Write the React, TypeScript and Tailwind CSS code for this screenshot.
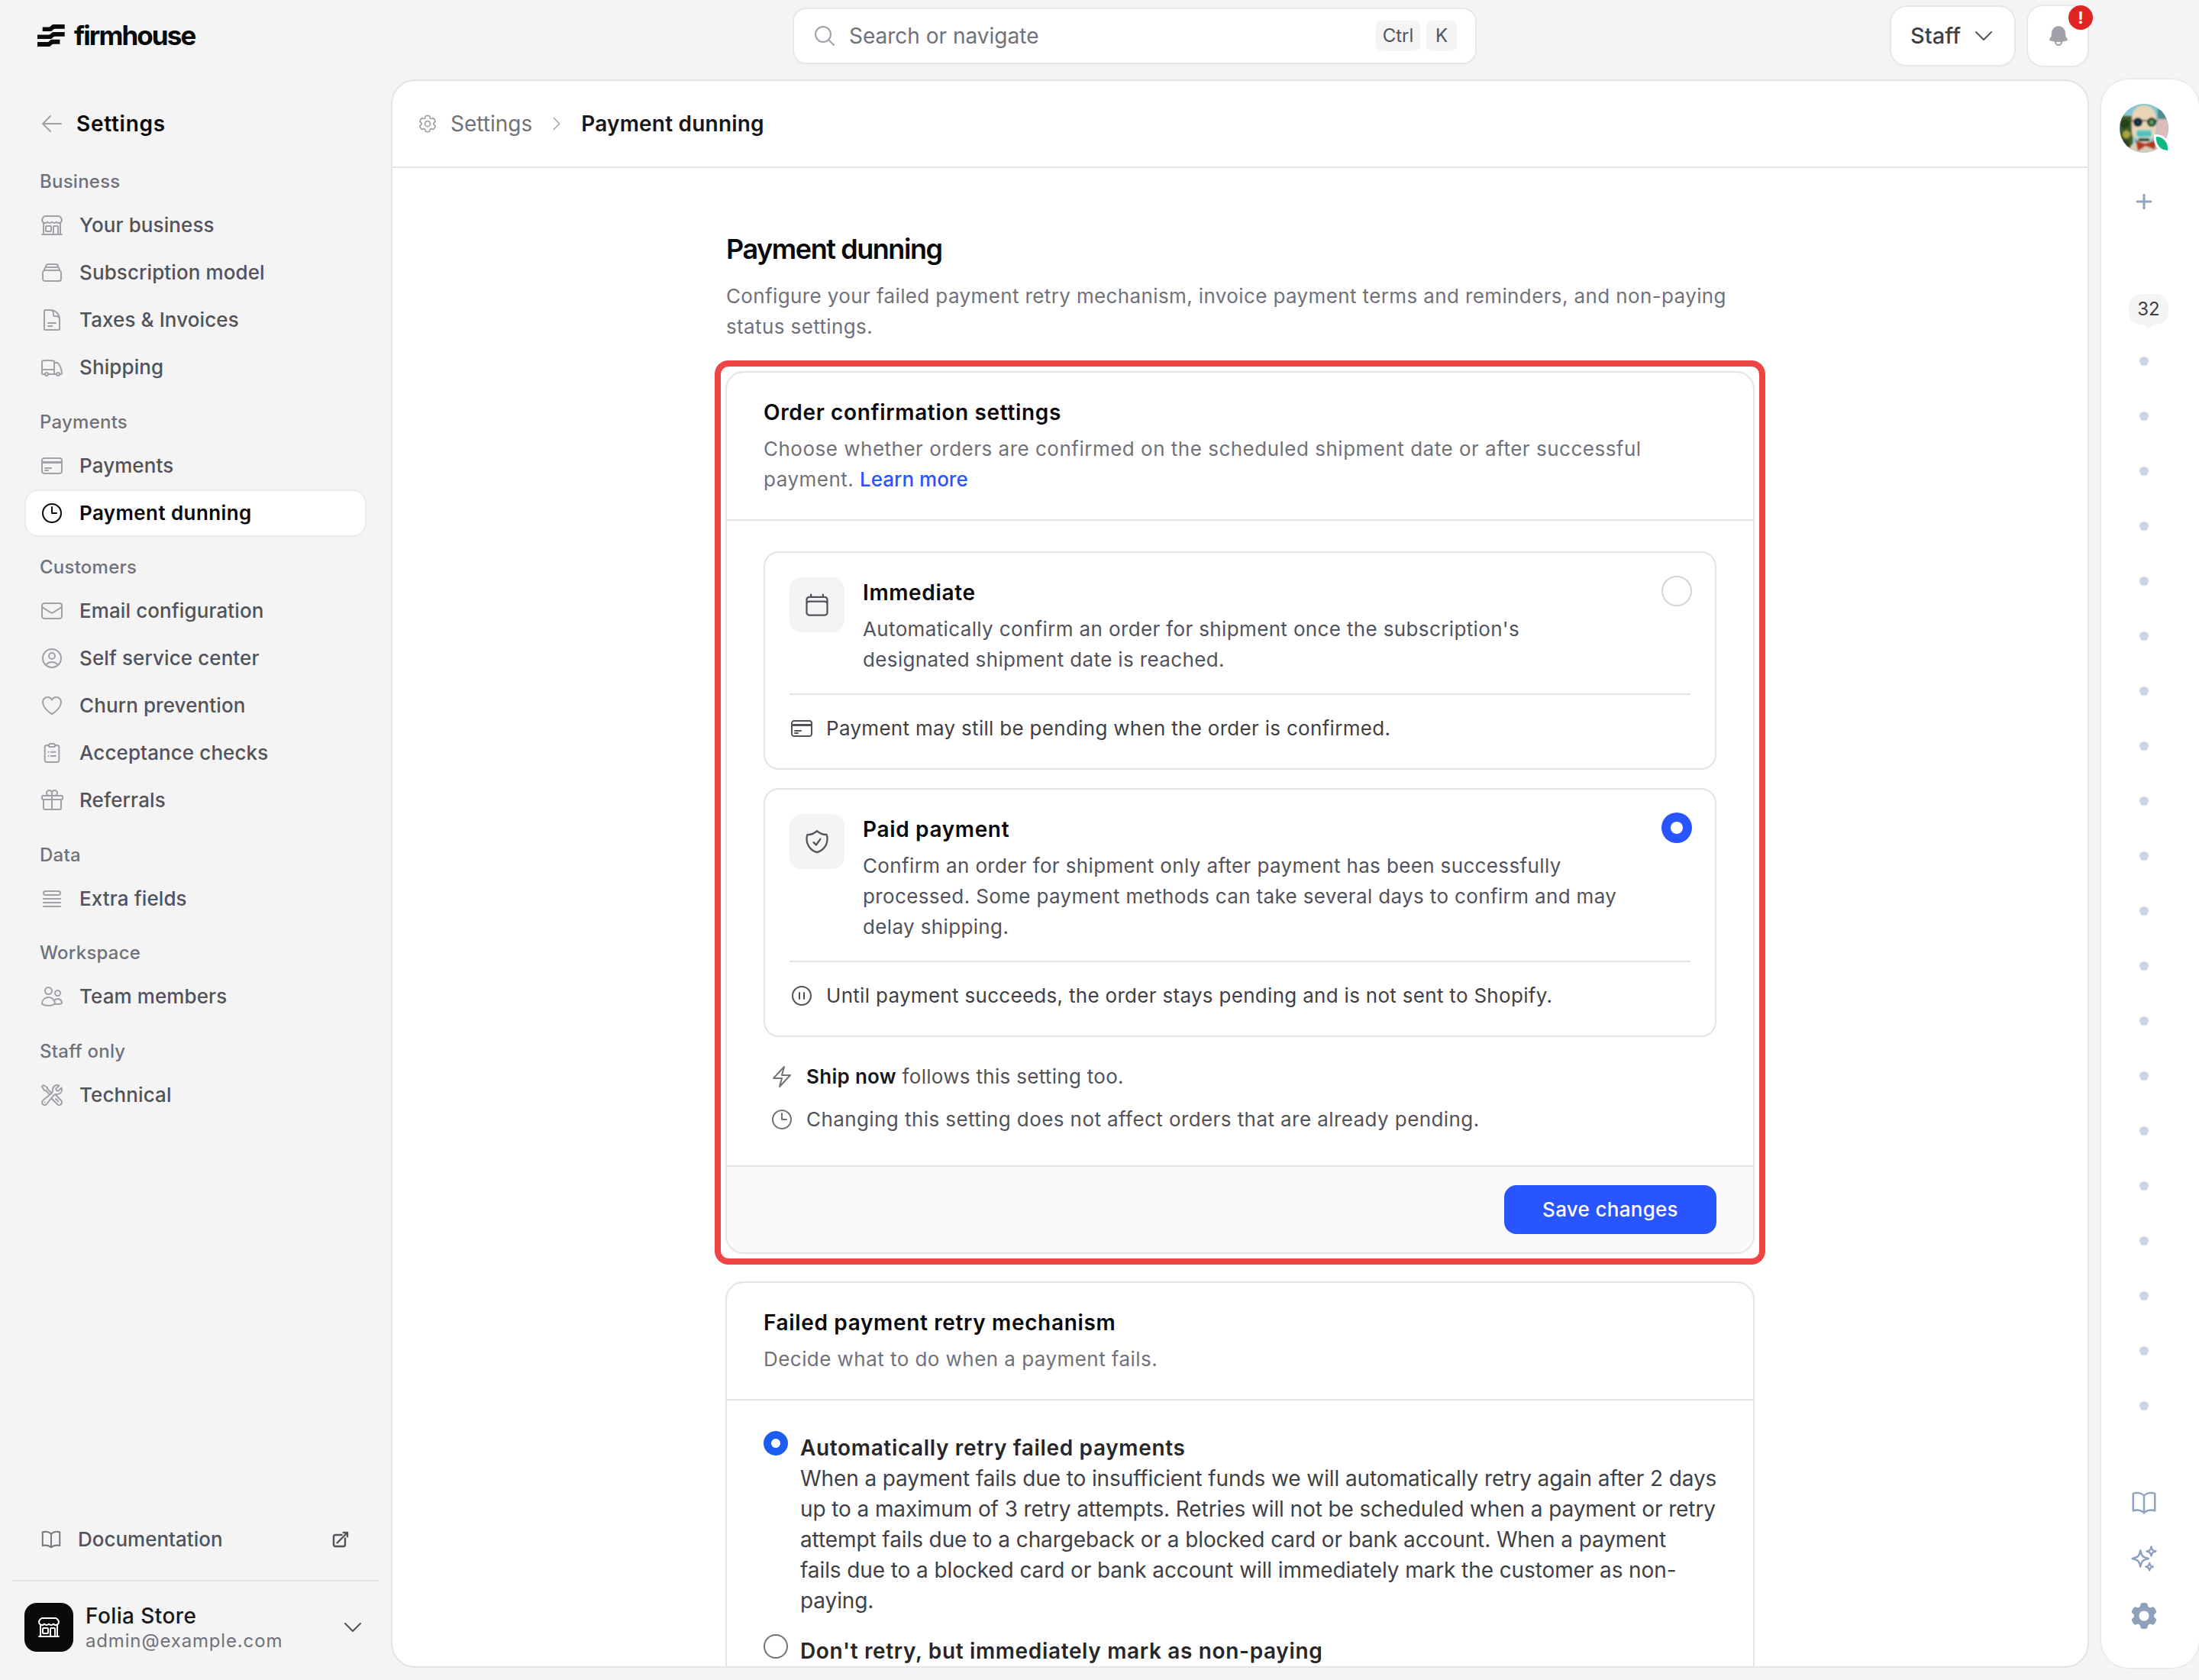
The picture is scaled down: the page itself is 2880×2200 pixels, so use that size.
import {
  HiOutlineArrowLeft,
  HiOutlineArrowTopRightOnSquare,
  HiOutlineBolt,
  HiOutlineBookOpen,
  HiOutlineBuildingStorefront,
  HiOutlineCalendar,
  HiOutlineChevronDown,
  HiOutlineChevronRight,
  HiOutlineClock,
  HiOutlineCog6Tooth,
  HiOutlineCreditCard,
  HiOutlineDocumentText,
  HiOutlineEnvelope,
  HiOutlineGift,
  HiOutlineHeart,
  HiOutlineMagnifyingGlass,
  HiOutlinePauseCircle,
  HiOutlineQueueList,
  HiOutlineRectangleStack,
  HiOutlineShieldCheck,
  HiOutlineSparkles,
  HiOutlineTruck,
  HiOutlineUserCircle,
  HiOutlineUsers,
  HiOutlineWrenchScrewdriver,
  HiBell,
  HiCog6Tooth,
  HiPlus,
} from "react-icons/hi2";
import type { ComponentType, ReactNode, SVGProps } from "react";

type Icon = ComponentType<SVGProps<SVGSVGElement> & { className?: string }>;

const ClipboardList: Icon = (props) => (
  <svg viewBox="0 0 24 24" fill="none" stroke="currentColor" strokeWidth={1.5} strokeLinecap="round" strokeLinejoin="round" {...props}>
    <path d="M9 4.5H6.75A1.75 1.75 0 0 0 5 6.25v13A1.75 1.75 0 0 0 6.75 21h10.5A1.75 1.75 0 0 0 19 19.25v-13a1.75 1.75 0 0 0-1.75-1.75H15" />
    <rect x="9" y="3" width="6" height="3" rx="1.2" />
    <path d="M11 11h4.5M11 15h4.5M8.5 11h.01M8.5 15h.01" />
  </svg>
);

const navGroups: { label: string; items: { label: string; icon: Icon; active?: boolean }[] }[] = [
  {
    label: "Business",
    items: [
      { label: "Your business", icon: HiOutlineBuildingStorefront },
      { label: "Subscription model", icon: HiOutlineRectangleStack },
      { label: "Taxes & Invoices", icon: HiOutlineDocumentText },
      { label: "Shipping", icon: HiOutlineTruck },
    ],
  },
  {
    label: "Payments",
    items: [
      { label: "Payments", icon: HiOutlineCreditCard },
      { label: "Payment dunning", icon: HiOutlineClock, active: true },
    ],
  },
  {
    label: "Customers",
    items: [
      { label: "Email configuration", icon: HiOutlineEnvelope },
      { label: "Self service center", icon: HiOutlineUserCircle },
      { label: "Churn prevention", icon: HiOutlineHeart },
      { label: "Acceptance checks", icon: ClipboardList },
      { label: "Referrals", icon: HiOutlineGift },
    ],
  },
  { label: "Data", items: [{ label: "Extra fields", icon: HiOutlineQueueList }] },
  { label: "Workspace", items: [{ label: "Team members", icon: HiOutlineUsers }] },
  { label: "Staff only", items: [{ label: "Technical", icon: HiOutlineWrenchScrewdriver }] },
];

const dots = Array.from({ length: 20 }, (_, i) => i);

const Logo = () => (
  <svg viewBox="0 0 36 29" className="w-[36px] h-[29px] shrink-0" fill="#0a0a0a">
    <path d="M6.7 3.4H15C18 3.4 18 0 21 0H35.7V5.7H23C20 5.7 20 9 17 9H6.7Z" />
    <path d="M0 13.4H15C18 13.4 18 10 21 10H35.7V15.7H23C20 15.7 20 19 17 19H0Z" />
    <path d="M0 23H13C16 23 16 19.7 19 19.7H29.4V25.7H21C18 25.7 18 29 15 29H0Z" />
  </svg>
);

const Avatar = () => (
  <div className="relative w-[64px] h-[64px] shrink-0">
    <svg viewBox="0 0 64 64" className="w-[64px] h-[64px] rounded-full">
      <defs>
        <filter id="soft">
          <feGaussianBlur stdDeviation="0.9" />
        </filter>
      </defs>
      <rect width="64" height="64" fill="#86c3d6" />
      <g filter="url(#soft)">
        <rect x="0" y="16" width="17" height="48" fill="#3f5a2c" />
        <circle cx="7" cy="26" r="6" fill="#27401f" />
        <circle cx="9" cy="40" r="5" fill="#a6a63c" />
        <circle cx="6" cy="54" r="7" fill="#2e3f1e" />
        <rect x="49" y="20" width="15" height="44" fill="#dcbdb9" />
        <rect x="50" y="6" width="12" height="14" fill="#4d8b8c" />
        <path d="M12 64C12 52 24 48 32 48S50 52 50 64Z" fill="#d6cdbb" />
        <path d="M16 20C16 7 24 2 32 2S48 7 48 20V38C48 44 40 47 32 47S16 44 16 38Z" fill="#e8d5b6" />
        <path d="M15 21H50V23H15Z" fill="#6b5a48" />
        <circle cx="24" cy="24" r="6" fill="#101820" />
        <circle cx="24" cy="24" r="3.2" fill="#1f3a5c" />
        <circle cx="42" cy="24" r="6" fill="#16251c" />
        <circle cx="42" cy="24" r="3.2" fill="#4f9c5e" />
        <rect x="22" y="34" width="20" height="10" rx="3.5" fill="#66cfcc" />
        <path d="M23 38H41M23 40.5H41" stroke="#2f8f92" strokeWidth="0.8" />
        <rect x="25" y="45" width="14" height="4" fill="#2c3a2e" />
        <path d="M21 48L33 52L48 48L46 60L34 55L24 62Z" fill="#b5381f" />
      </g>
    </svg>
    <span className="absolute right-[1px] bottom-[3px] w-[15px] h-[18px] rounded-tr-full rounded-bl-full bg-[#10b981] ring-[3px] ring-white" />
  </div>
);

const NavItem = ({ label, icon: ItemIcon, active }: { label: string; icon: Icon; active?: boolean }) => (
  <a
    className={
      active
        ? "flex items-center gap-[20px] h-[58px] px-[18px] rounded-[16px] bg-white shadow-[0_0_0_2px_#ececec] text-[26px] tracking-[0.4px] text-[#09090b] font-semibold"
        : "flex items-center gap-[20px] h-[58px] px-[18px] rounded-[16px] text-[26px] tracking-[0.1px] text-[#52525b] font-medium"
    }
  >
    <ItemIcon className={active ? "w-[32px] h-[32px] text-[#09090b]" : "w-[32px] h-[32px] text-[#a1a1aa]"} />
    <span>{label}</span>
  </a>
);

const Sidebar = () => (
  <aside className="w-[512px] shrink-0 flex flex-col text-[28px] leading-[40px]">
    <div className="flex items-center gap-[12px] pl-[49px] h-[92px]">
      <Logo />
      <span className="text-[35px] font-bold tracking-[-0.055em] text-[#0a0a0a]">firmhouse</span>
    </div>
    <div className="flex items-center gap-[16px] px-[52px] h-[40px] mt-[50px] mb-[40px]">
      <HiOutlineArrowLeft className="w-[32px] h-[32px] text-[#a1a1aa]" />
      <span className="font-semibold text-[#09090b] tracking-[0.026em]">Settings</span>
    </div>
    <nav className="flex flex-col gap-[26.5px] px-[34px]">
      {navGroups.map((group) => (
        <div key={group.label} className="flex flex-col">
          <div className="h-[32px] px-[18px] mb-[12px] text-[24px] leading-[32px] font-medium tracking-[0.01em] text-[#71717a]">
            {group.label}
          </div>
          <div className="flex flex-col gap-[4px]">
            {group.items.map((item) => (
              <NavItem key={item.label} {...item} />
            ))}
          </div>
        </div>
      ))}
    </nav>
    <div className="mt-auto flex items-center h-[56px] pl-[52px] pr-[54px] text-[26px] text-[#52525b] font-medium">
      <HiOutlineBookOpen className="w-[30px] h-[30px] text-[#71717a]" />
      <span className="ml-[20px]">Documentation</span>
      <HiOutlineArrowTopRightOnSquare className="ml-auto w-[24px] h-[24px] text-[#52525b] stroke-[2.4]" />
    </div>
    <div className="mx-[16px] mt-[25px] border-t-2 border-[#e4e4e4] flex items-center pl-[16px] pr-[18px] pt-[27px] pb-[36px]">
      <div className="w-[64px] h-[64px] rounded-[16px] bg-[#0a0a0a] flex items-center justify-center shrink-0">
        <HiOutlineBuildingStorefront className="w-[32px] h-[32px] text-white" />
      </div>
      <div className="ml-[16px] flex flex-col">
        <span className="text-[#18181b] leading-[36px] tracking-[0.4px] font-medium">Folia Store</span>
        <span className="text-[24px] leading-[30px] tracking-[0.035em] text-[#71717a]">admin@example.com</span>
      </div>
      <HiOutlineChevronDown className="ml-auto w-[32px] h-[32px] text-[#52525b]" />
    </div>
  </aside>
);

const TopBar = () => (
  <header className="h-[104px] shrink-0 flex items-center pb-[10px]">
    <div className="ml-[528px] w-[892px] h-[70px] flex items-center rounded-[16px] bg-white shadow-[0_0_0_2px_#e8e8e8,0_2px_4px_rgba(0,0,0,0.05)] pl-[24px] pr-[24px]">
      <HiOutlineMagnifyingGlass className="w-[32px] h-[32px] text-[#a1a1aa]" />
      <span className="ml-[16px] text-[28px] text-[#71717a]">Search or navigate</span>
      <kbd className="ml-auto w-[58px] h-[40px] rounded-[8px] bg-[#f4f4f5] flex items-center justify-center text-[24px] font-[inherit] text-[#52525b]">Ctrl</kbd>
      <kbd className="ml-[8px] w-[40px] h-[40px] rounded-[8px] bg-[#f4f4f5] flex items-center justify-center text-[24px] font-[inherit] text-[#52525b]">K</kbd>
    </div>
    <button className="ml-[545px] w-[161px] h-[76px] flex items-center rounded-[20px] bg-white shadow-[0_0_0_2px_#e8e8e8,0_2px_4px_rgba(0,0,0,0.05)] pl-[25px] text-[29px] font-medium text-[#3f3f46]">
      Staff
      <HiOutlineChevronDown className="ml-[14px] w-[32px] h-[32px] text-[#52525b]" />
    </button>
    <button className="relative ml-[18px] w-[78px] h-[78px] flex items-center justify-center rounded-[20px] bg-white shadow-[0_0_0_2px_#e8e8e8]">
      <HiBell className="w-[32px] h-[32px] text-[#a1a1aa] translate-x-[1px]" />
      <span className="absolute -top-[1px] right-[-7px] w-[32px] h-[32px] rounded-full bg-[#e02424] flex items-center justify-center text-[22px] font-bold text-white">
        !
      </span>
    </button>
  </header>
);

const Radio = ({ checked, small }: { checked?: boolean; small?: boolean }) => {
  const size = small ? "w-[32px] h-[32px]" : "w-[40px] h-[40px]";
  const dot = small ? "w-[12px] h-[12px]" : "w-[16px] h-[16px]";
  if (checked) {
    return (
      <span className={`${size} shrink-0 rounded-full ${small ? "bg-[#1d5cf0]" : "bg-[#2855ff]"} flex items-center justify-center`}>
        <span className={`${dot} rounded-full bg-white`} />
      </span>
    );
  }
  return <span className={`block ${size} shrink-0 rounded-full border-2 ${small ? "border-[#71717a]" : "border-[#d4d4d8]"} bg-white`} />;
};

const OptionCard = ({
  icon: OptionIcon,
  title,
  description,
  noteIcon: NoteIcon,
  note,
  checked,
}: {
  icon: Icon;
  title: string;
  description: ReactNode;
  noteIcon: Icon;
  note: string;
  checked?: boolean;
}) => (
  <div className="rounded-[20px] border-2 border-[#e4e4e7] p-[32px]">
    <div className="flex items-start gap-[24px] pb-[24px] border-b-2 border-[#e4e4e7]">
      <div className="w-[72px] h-[72px] shrink-0 rounded-[16px] bg-[#f4f4f5] flex items-center justify-center">
        <OptionIcon className="w-[36px] h-[36px] text-[#52525b]" />
      </div>
      <div className="flex-1 min-w-0">
        <div className="text-[28px] tracking-[0.65px] font-semibold text-[#09090b]">{title}</div>
        <div className="mt-[8px] text-[#52525b] max-w-[992px] tracking-[0.36px]">{description}</div>
      </div>
      <div className="-mt-[2px] -mr-[2px]">
        <Radio checked={checked} />
      </div>
    </div>
    <div className="flex items-center gap-[16px] pt-[24px] text-[#3f3f46]">
      <NoteIcon className="w-[32px] h-[32px] text-[#52525b]" />
      <span>{note}</span>
    </div>
  </div>
);

const OrderCard = () => (
  <div className="-mx-[14px] -mt-[14px] rounded-[18px] border-[8px] border-[#ef4444] p-[6px] bg-white">
    <div className="rounded-[24px] border-2 border-[#e4e4e7] overflow-hidden">
      <div className="px-[48px] pt-[32px] pb-[32px] border-b-2 border-[#e4e4e7]">
        <h2 className="text-[28px] tracking-[0.65px] font-semibold text-[#09090b]">Order confirmation settings</h2>
        <p className="mt-[8px] text-[#71717a] tracking-[0.5px]">
          Choose whether orders are confirmed on the scheduled shipment date or after successful payment.{" "}
          <a className="text-[#2855ff] font-medium tracking-normal">Learn more</a>
        </p>
      </div>
      <div className="px-[48px] py-[40px] flex flex-col">
        <div className="flex flex-col gap-[24px]">
          <OptionCard
            icon={HiOutlineCalendar}
            title="Immediate"
            description="Automatically confirm an order for shipment once the subscription's designated shipment date is reached."
            noteIcon={HiOutlineCreditCard}
            note="Payment may still be pending when the order is confirmed."
          />
          <OptionCard
            checked
            icon={HiOutlineShieldCheck}
            title="Paid payment"
            description="Confirm an order for shipment only after payment has been successfully processed. Some payment methods can take several days to confirm and may delay shipping."
            noteIcon={HiOutlinePauseCircle}
            note="Until payment succeeds, the order stays pending and is not sent to Shopify."
          />
        </div>
        <div className="mt-[32px] flex flex-col gap-[16px] px-[8px] text-[#52525b]">
          <div className="flex items-center gap-[16px]">
            <HiOutlineBolt className="w-[32px] h-[32px] text-[#71717a]" />
            <span>
              <strong className="font-semibold text-[#18181b]">Ship now</strong> follows this setting too.
            </span>
          </div>
          <div className="flex items-center gap-[16px]">
            <HiOutlineClock className="w-[32px] h-[32px] text-[#71717a]" />
            <span className="tracking-[0.42px]">Changing this setting does not affect orders that are already pending.</span>
          </div>
        </div>
      </div>
      <div className="flex justify-end bg-[#fafafa] border-t-2 border-[#e4e4e7] px-[48px] py-[24px]">
        <button className="w-[278px] h-[64px] rounded-[16px] bg-[#2855ff] text-white font-medium">Save changes</button>
      </div>
    </div>
  </div>
);

const RetryCard = () => (
  <div className="mt-[22px] rounded-t-[24px] border-2 border-[#e4e4e7]">
    <div className="px-[48px] pt-[32px] pb-[32px] border-b-2 border-[#e4e4e7]">
      <h2 className="text-[28px] tracking-[0.65px] font-semibold text-[#09090b]">Failed payment retry mechanism</h2>
      <p className="mt-[8px] text-[#71717a] tracking-[0.45px]">Decide what to do when a payment fails.</p>
    </div>
    <div className="px-[48px] pt-[40px] pb-[120px] flex flex-col gap-[24px]">
      <div className="flex items-start gap-[16px]">
        <Radio small checked />
        <div className="pt-[2px] flex-1">
          <div className="text-[28px] tracking-[0.65px] font-semibold text-[#27272a]">Automatically retry failed payments</div>
          <p className="-mr-[6px] text-[28px] tracking-[-0.1px] text-[#3f3f46]">
            When a payment fails due to insufficient funds we will automatically retry again after 2 days up to a maximum of 3 retry attempts.
            Retries will not be scheduled when a payment or retry attempt fails due to a chargeback or a blocked card or bank account. When a
            payment
            <br />
            fails due to a blocked card or bank account will immediately mark the customer as non-
            <br />
            paying.
          </p>
        </div>
      </div>
      <div className="flex items-start gap-[16px]">
        <Radio small />
        <div className="pt-[2px] text-[28px] tracking-[0.65px] font-semibold text-[#27272a]">Don't retry, but immediately mark as non-paying</div>
      </div>
    </div>
  </div>
);

const Main = () => (
  <main className="flex-1 min-h-0 mb-[16px] rounded-[32px] border-2 border-[#e4e4e4] bg-white overflow-hidden flex flex-col text-[26px] tracking-[0.3px] leading-[40px]">
    <div className="h-[114px] shrink-0 border-b-2 border-[#e4e4e4] flex items-center pl-[32px] text-[28px] tracking-normal">
      <HiOutlineCog6Tooth className="w-[28px] h-[28px] text-[#a1a1aa]" />
      <span className="ml-[16px] text-[#71717a]">Settings</span>
      <HiOutlineChevronRight className="ml-[20px] w-[24px] h-[24px] text-[#a1a1aa]" />
      <span className="ml-[20px] font-semibold tracking-[0.2px] text-[#18181b]">Payment dunning</span>
    </div>
    <div className="w-[1348px] shrink-0 mx-auto pt-[78px]">
      <h1 className="pl-[1px] text-[36px] leading-[56px] font-semibold tracking-[-0.04em] text-[#09090b]">Payment dunning</h1>
      <p className="pl-[1px] mt-[14px] mb-[38px] text-[#71717a] tracking-[0.38px]">
        Configure your failed payment retry mechanism, invoice payment terms and reminders, and non-paying status settings.
      </p>
      <OrderCard />
      <RetryCard />
    </div>
  </main>
);

const Rail = () => (
  <aside className="w-[128px] ml-[16px] shrink-0 mt-[104px] mb-[16px] rounded-[36px] bg-white shadow-[0_0_3px_rgba(0,0,0,0.14)] flex flex-col items-center pt-[32px] pb-[47px] pr-[16px]">
    <Avatar />
    <HiPlus className="mt-[50px] w-[28px] h-[28px] text-[#94a3b8] stroke-[1.2]" />
    <div className="relative mt-[107px] ml-[12px] w-[52px] h-[40px] rounded-[16px] bg-[#f4f4f5] flex items-center justify-center text-[24px] text-[#3f3f46]">
      32
      <span className="absolute -bottom-[4px] left-[21px] w-[10px] h-[10px] rotate-45 bg-[#f4f4f5]" />
    </div>
    <div className="mt-[42px] flex flex-col gap-[60px]">
      {dots.map((d) => (
        <span key={d} className="block w-[12px] h-[12px] rounded-full bg-[#cbd5e1]" />
      ))}
    </div>
    <div className="mt-auto flex flex-col items-center gap-[35px] text-[#8fa0bd]">
      <HiOutlineBookOpen className="w-[38px] h-[38px]" />
      <HiOutlineSparkles className="w-[38px] h-[38px]" />
      <HiCog6Tooth className="w-[42px] h-[42px]" />
    </div>
  </aside>
);

export default function App() {
  return (
    <div className="w-[2880px] h-[2200px] flex overflow-hidden bg-[#f4f4f4] [font-family:Inter,sans-serif]">
      <Sidebar />
      <div className="w-[2224px] shrink-0 flex flex-col min-h-0 relative">
        <TopBar />
        <Main />
      </div>
      <Rail />
    </div>
  );
}
